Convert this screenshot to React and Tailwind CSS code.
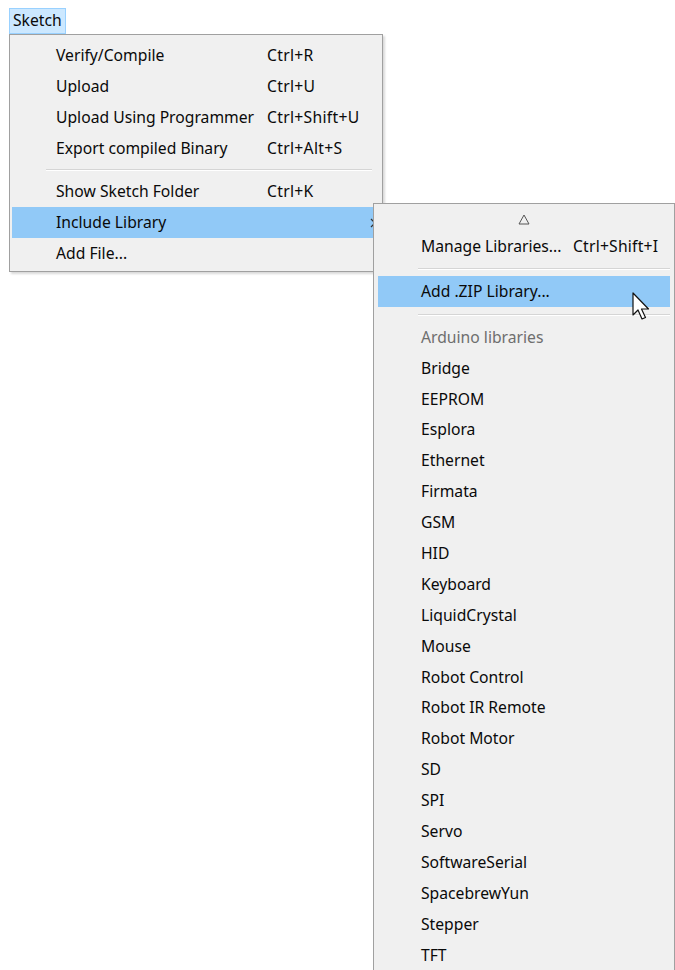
import React from 'react';

const mainItems = [
  { label: 'Verify/Compile', shortcut: 'Ctrl+R' },
  { label: 'Upload', shortcut: 'Ctrl+U' },
  { label: 'Upload Using Programmer', shortcut: 'Ctrl+Shift+U' },
  { label: 'Export compiled Binary', shortcut: 'Ctrl+Alt+S' },
  { separator: true },
  { label: 'Show Sketch Folder', shortcut: 'Ctrl+K' },
  { label: 'Include Library', submenu: true, active: true },
  { label: 'Add File...' },
];

const libraries = [
  'Bridge', 'EEPROM', 'Esplora', 'Ethernet', 'Firmata', 'GSM', 'HID', 'Keyboard',
  'LiquidCrystal', 'Mouse', 'Robot Control', 'Robot IR Remote', 'Robot Motor',
  'SD', 'SPI', 'Servo', 'SoftwareSerial', 'SpacebrewYun', 'Stepper', 'TFT',
];

const Separator = ({ className }) => (
  <div className={`flex items-center ${className}`}>
    <div className="w-full border-t border-[#d5d5d5] border-b border-b-white" />
  </div>
);

const Cursor = () => (
  <svg className="absolute left-[632px] top-[292px]" width="19" height="29" viewBox="0 0 19 29">
    <path
      d="M1 1 L1 23 L6 18 L10 27 L13.5 25.5 L9.5 17 L16.5 17 Z"
      fill="#fff"
      stroke="#111"
      strokeWidth="1.2"
      strokeLinejoin="round"
    />
  </svg>
);

export default function App() {
  return (
    <div
      className="relative w-[675px] h-[970px] bg-white overflow-hidden text-[15.7px] text-[#0a0a0a]"
      style={{ fontFamily: '"Noto Sans", "Open Sans", sans-serif' }}
    >
      {/* menu bar */}
      <div className="pl-[9px] pt-[8px] flex">
        <div className="h-[26px] px-[3px] flex items-center bg-[#cce8ff] border border-[#99d1ff]">Sketch</div>
      </div>

      {/* Sketch menu */}
      <div className="ml-[9px] w-[374px] bg-[#f0f0f0] border border-[#a0a0a0] pt-[5px] pb-[2px] shadow-[2px_2px_2px_rgba(0,0,0,0.15)]">
        {mainItems.map((item, i) =>
          item.separator ? (
            <Separator key={i} className="h-[12px] pl-[36px] pr-[10px]" />
          ) : (
            <div
              key={i}
              className={`h-[31px] mx-[2px] flex items-center relative ${item.active ? 'bg-[#91c9f7]' : ''}`}
            >
              <span className="pl-[44px] w-[255px] shrink-0">{item.label}</span>
              <span className="tracking-[0.3px]">{item.shortcut}</span>
              {item.submenu && (
                <svg className="absolute right-[4px] top-[11px]" width="6" height="10" viewBox="0 0 6 10">
                  <path d="M1 1 L5 5 L1 9" fill="none" stroke="#333" strokeWidth="1.2" />
                </svg>
              )}
            </div>
          )
        )}
      </div>

      {/* Include Library submenu */}
      <div className="absolute left-[373px] top-[203px] w-[302px] h-[780px] bg-[#f0f0f0] border border-[#a0a0a0] pt-[3px] shadow-[2px_2px_2px_rgba(0,0,0,0.15)]">
        <div className="h-[24px] flex items-center justify-center">
          <svg width="12" height="11" viewBox="0 0 12 11">
            <path d="M6 1 L11 10 L1 10 Z" fill="none" stroke="#555" strokeWidth="1" />
          </svg>
        </div>
        <div className="h-[31px] flex items-center mx-[2px]">
          <span className="pl-[45px] w-[197px] shrink-0">Manage Libraries...</span>
          <span className="tracking-[0.2px]">Ctrl+Shift+I</span>
        </div>
        <Separator className="h-[14px] pl-[44px] pr-[4px]" />
        <div className="h-[31px] flex items-center mx-[4px] bg-[#91c9f7]">
          <span className="pl-[43px]">Add .ZIP Library...</span>
        </div>
        <Separator className="h-[15px] pl-[44px] pr-[4px]" />
        <div className="h-[31px] flex items-center pl-[47px] text-[#6e6e6e]">Arduino libraries</div>
        {libraries.map((lib) => (
          <div key={lib} className="h-[30.9px] flex items-center pl-[47px]">{lib}</div>
        ))}
      </div>

      <Cursor />
    </div>
  );
}
